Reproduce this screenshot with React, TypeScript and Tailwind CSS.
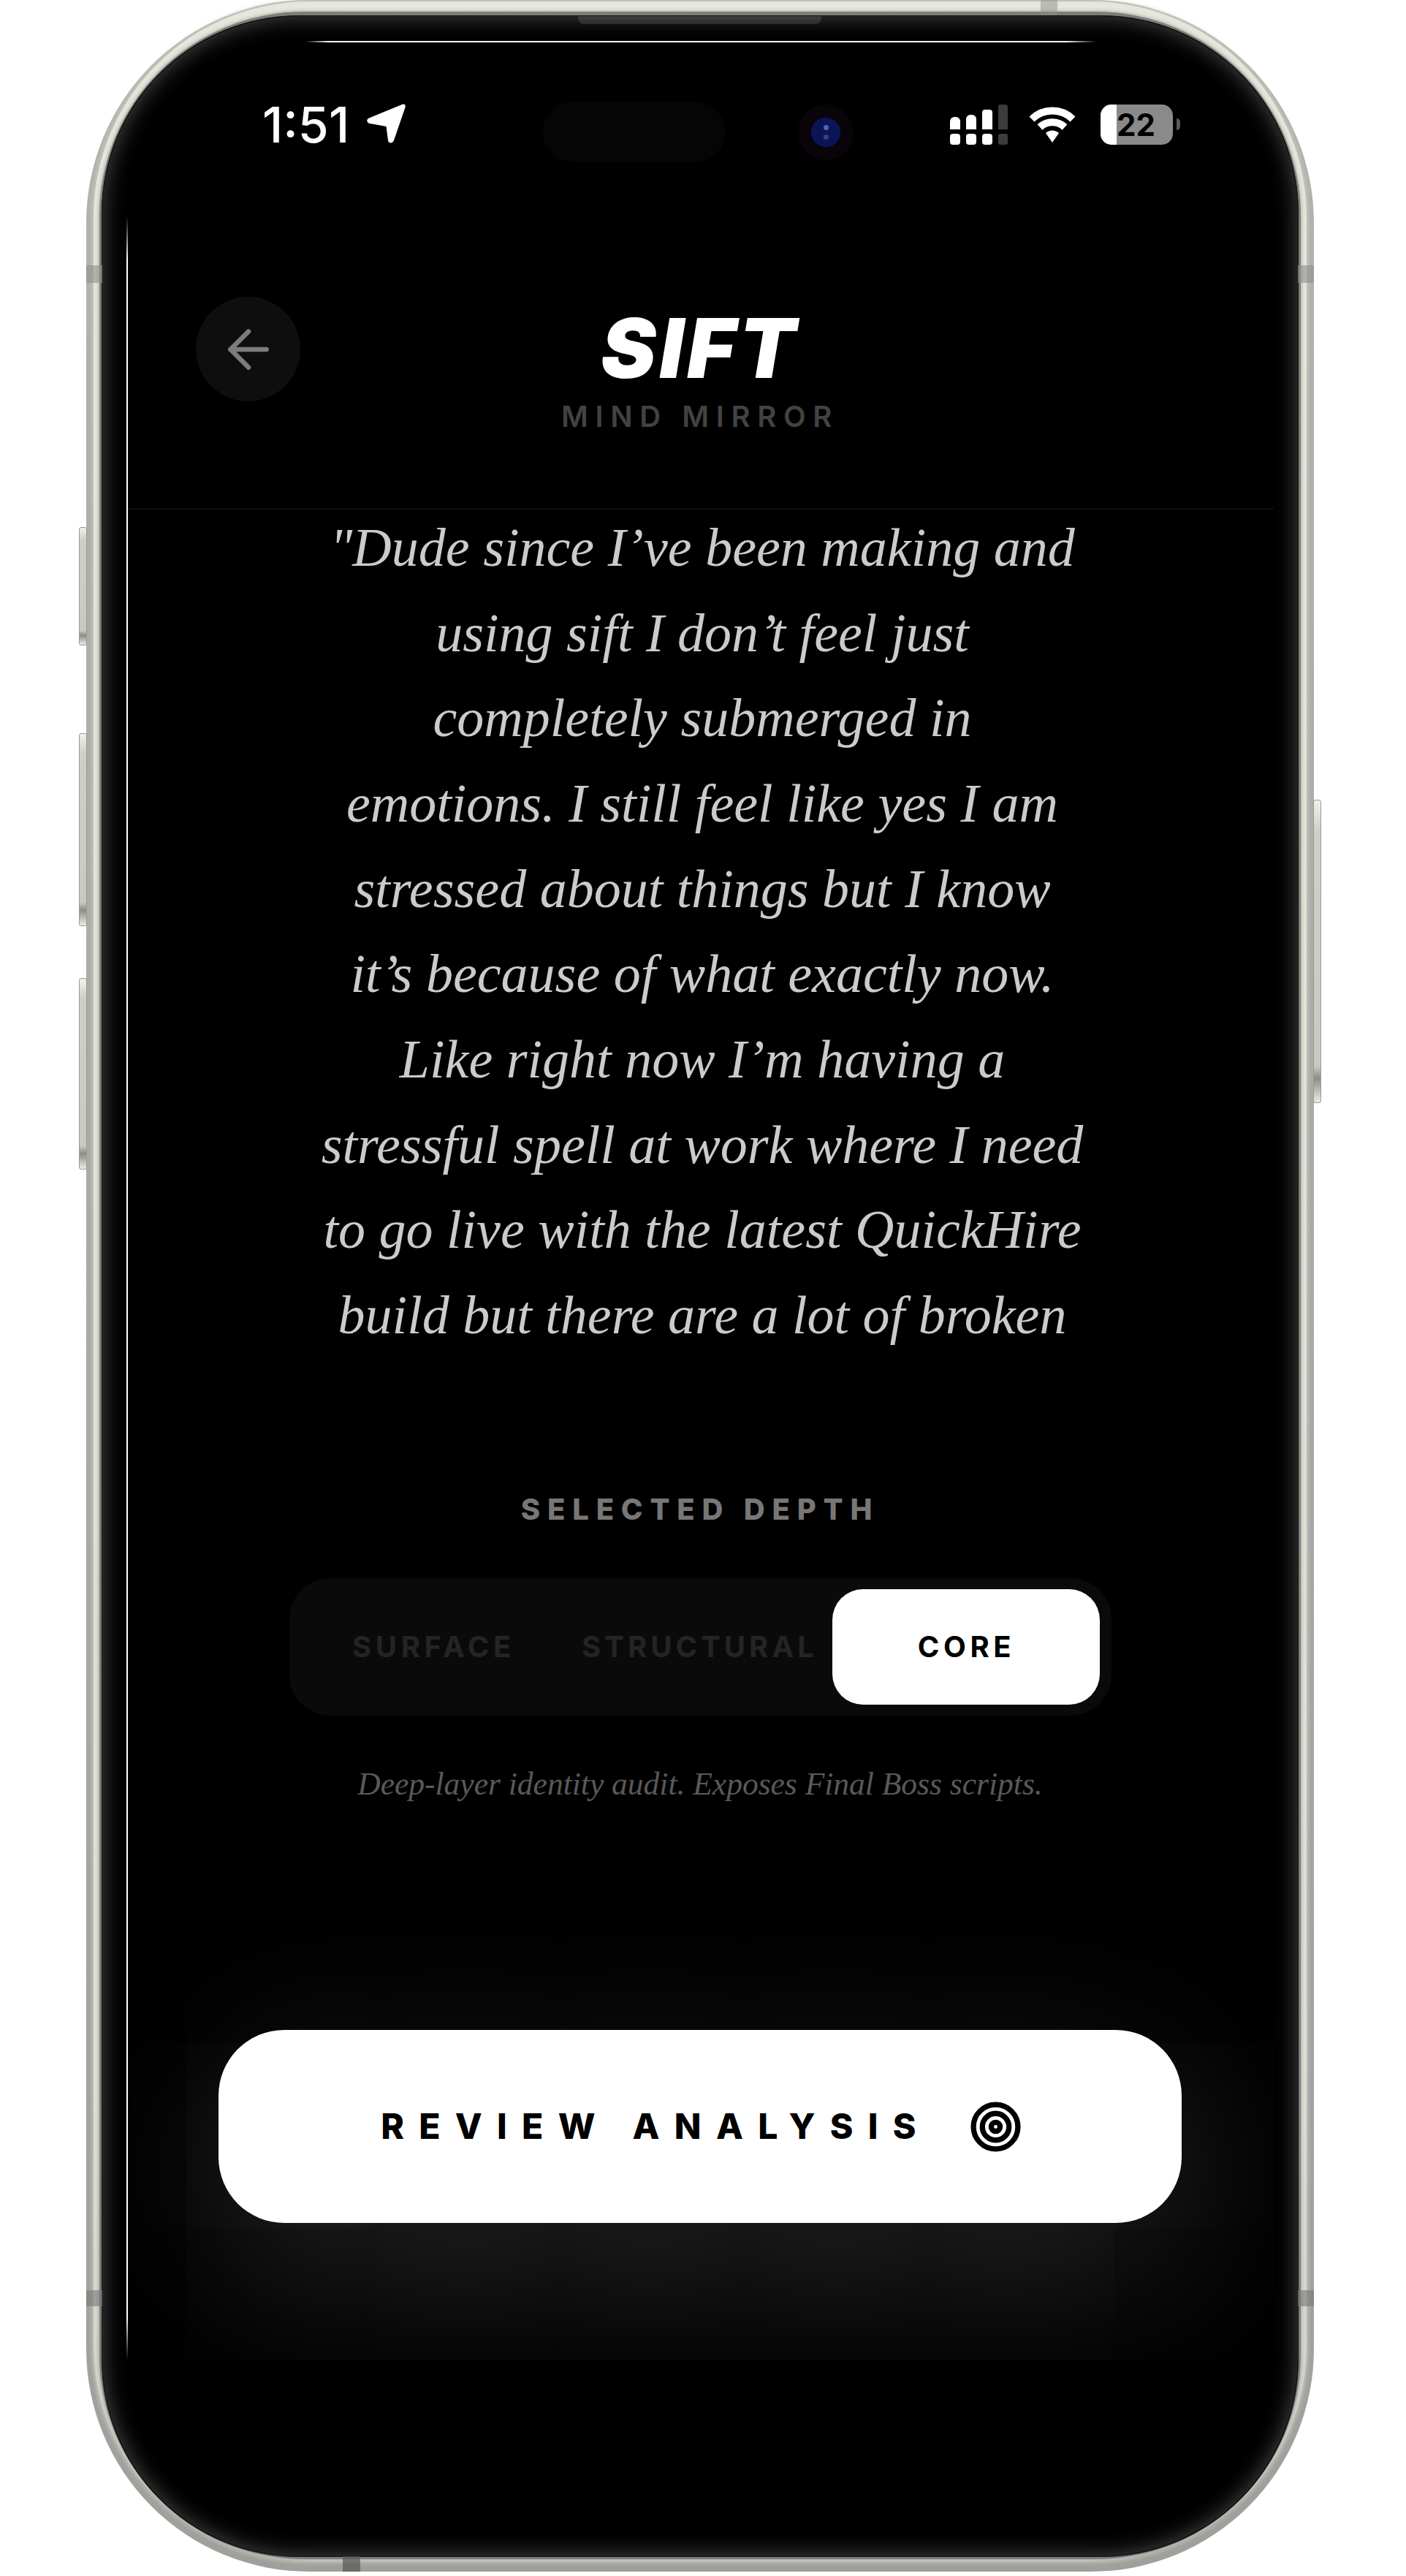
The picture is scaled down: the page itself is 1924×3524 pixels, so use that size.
import React from 'react';
import { ArrowLeft, Target } from 'lucide-react';

const quoteLines = [
  '"Dude since I’ve been making and',
  'using sift I don’t feel just',
  'completely submerged in',
  'emotions. I still feel like yes I am',
  'stressed about things but I know',
  'it’s because of what exactly now.',
  'Like right now I’m having a',
  'stressful spell at work where I need',
  'to go live with the latest QuickHire',
  'build but there are a lot of broken',
];

function SideButton({ className }: { className: string }) {
  return (
    <div
      className={`absolute w-[11px] rounded-[3px] border border-[#9a9a96] bg-[linear-gradient(180deg,#f2f2ec_0%,#cfcfca_10%,#c9c9c4_88%,#8c8c88_92%,#ecece6_100%)] ${className}`}
    />
  );
}

function StatusBar() {
  return (
    <div className="flex h-[56px] items-center justify-between pl-[186px] pr-[128px] text-white">
      <div className="flex items-center gap-[24px]">
        <span className="font-['Inter'] text-[68px] leading-[56px] font-medium">1:51</span>
        <svg width="53" height="54" viewBox="0 0 53 54" className="mt-[-2px]">
          <path d="M48 1 C51.5 -0.5 53.5 1.5 52.5 5 L37 50 C35.5 54.5 29.5 54.5 29 50 L26.5 31 L4 27 C-0.5 26 -1 21 3 19.5 Z" fill="#fff" />
        </svg>
      </div>
      <div className="flex items-center">
        <div className="flex flex-col gap-[6px]">
          <div className="flex items-end gap-[8px]">
            <div className="h-[17px] w-[14px] rounded-t-[6px] bg-white" />
            <div className="h-[20px] w-[14px] rounded-t-[6px] bg-white" />
            <div className="h-[27px] w-[14px] rounded-t-[4px] bg-white" />
            <div className="h-[34px] w-[13px] rounded-t-[3px] bg-[#3c3c3c]" />
          </div>
          <div className="flex gap-[8px]">
            <div className="h-[15px] w-[14px] rounded-[4px] bg-white" />
            <div className="h-[15px] w-[14px] rounded-[4px] bg-white" />
            <div className="h-[15px] w-[14px] rounded-[4px] bg-white" />
            <div className="h-[15px] w-[13px] rounded-[3px] bg-[#3c3c3c]" />
          </div>
        </div>
        <svg width="66" height="50" viewBox="0 0 66 50" className="ml-[28px]">
          <path d="M5 18 A40 40 0 0 1 61 18" fill="none" stroke="#fff" strokeWidth="10" />
          <path d="M16 29 A25 25 0 0 1 50 29" fill="none" stroke="#fff" strokeWidth="10" />
          <path d="M24 37 A13 13 0 0 1 42 37 L33 50 Z" fill="#fff" />
        </svg>
        <div className="ml-[33px] flex h-[55px] w-[99px] overflow-hidden rounded-[15px] bg-[#8a8a8a]">
          <div className="h-full w-[22px] bg-white" />
          <span className="w-[53px] text-center font-['Inter'] text-[42px] leading-[55px] font-bold text-black">22</span>
        </div>
        <div className="ml-[5px] h-[16px] w-[5px] rounded-r-full bg-[#5a5a5a]" />
      </div>
    </div>
  );
}

export default function App() {
  return (
    <div className="h-[3524px] w-[1924px] bg-white">
      <div className="relative ml-[118px] h-[3518px] w-[1680px]">
        {/* hardware buttons */}
        <SideButton className="left-[-10px] top-[721px] h-[162px]" />
        <SideButton className="left-[-10px] top-[1003px] h-[264px]" />
        <SideButton className="left-[-10px] top-[1338px] h-[262px]" />
        <SideButton className="right-[-10px] top-[1094px] h-[415px]" />

        {/* metal frame */}
        <div className="h-full rounded-[305px] bg-[linear-gradient(180deg,#b4b4af,#a09f9b)] pt-[2px] px-[10px] pb-[14px]">
          <div className="h-full rounded-[295px] bg-[linear-gradient(180deg,#e6e6dc_0%,#dedfd5_80%,#cfcfc9_100%)] pt-[14px] px-[8px] pb-[3px] shadow-[0_0_5px_2px_rgba(205,205,198,0.8)]">
            <div className="h-full rounded-[280px] bg-[#7d7d7a] pt-[5px] px-[3px] pb-[3px] shadow-[0_0_4px_1px_rgba(150,150,146,0.7)]">
              <div className="relative flex h-full flex-col overflow-hidden rounded-[270px] border border-[#111111] bg-black">
                {/* screen edge glow */}
                <div className="pointer-events-none absolute inset-0 z-10 rounded-[270px] shadow-[inset_0_0_30px_rgba(255,255,255,0.3)]" />
                {/* speaker */}
                <div className="absolute left-[651px] top-0 h-[11px] w-[333px] rounded-b-[8px] bg-[#1e1e1e]" />
                {/* island and camera */}
                <div className="absolute left-[602px] top-[117px] h-[83px] w-[251px] rounded-[42px] bg-[#050505]" />
                <div className="absolute left-[952px] top-[121px] flex h-[76px] w-[76px] items-center justify-center rounded-full bg-[#08040a]">
                  <div className="flex h-[40px] w-[40px] flex-col items-center justify-center gap-[6px] rounded-full bg-[#0c1458]">
                    <div className="h-[7px] w-[7px] rounded-full bg-[#5560b8]" />
                    <div className="h-[7px] w-[7px] rounded-full bg-[#3a4270]" />
                  </div>
                </div>
                {/* render seams */}
                <div className="absolute left-[278px] top-[34px] h-[2px] w-[1083px] bg-[linear-gradient(90deg,transparent,#fff_3%,#fff_96%,transparent)]" />
                <div className="absolute left-[33px] top-[274px] h-[2933px] w-[2px] bg-[linear-gradient(180deg,transparent,#fff_2%,#fff_98%,transparent)]" />

                <div className="mx-[33px] flex h-[3207px] flex-col overflow-hidden pt-[120px]">
                  <StatusBar />

                  <header className="mt-[208px] h-[291px] shrink-0 border-b-2 border-[#0f0f0f]">
                    <div className="grid grid-cols-[1fr_auto_1fr] items-start">
                      <button className="ml-[95px] flex h-[143px] w-[143px] items-center justify-center rounded-full bg-[#0e0e0e] text-[#7c7c7c]">
                        <ArrowLeft size={84} strokeWidth={1.9} />
                      </button>
                      <div className="flex flex-col items-center pt-[10px]">
                        <h1 className="font-['Inter'] text-[113px] leading-[120px] font-black italic tracking-[5px] text-white">SIFT</h1>
                        <p className="mt-[10px] font-['Inter'] text-[40px] leading-[48px] font-semibold tracking-[0.24em] text-[#424242]">MIND MIRROR</p>
                      </div>
                      <div />
                    </div>
                  </header>

                  <div className="mt-[-6px] h-[1188px] shrink-0 pl-[6px] text-center font-['Liberation_Serif'] text-[74px] leading-[116.67px] text-[#cbcbcb] italic">
                    {quoteLines.map((line) => (
                      <div key={line}>{line}</div>
                    ))}
                  </div>

                  <p className="mt-[162px] text-center font-['Inter'] text-[40px] leading-[48px] font-extrabold tracking-[0.245em] text-[#777777]">SELECTED DEPTH</p>

                  <div className="mx-auto mt-[70px] flex h-[188px] w-[1125px] shrink-0 items-center rounded-[56px] bg-[#0a0a0a] pl-[15px] pr-[15px]">
                    <span className="w-[366px] text-center font-['Inter'] text-[40px] font-bold tracking-[0.14em] text-[#242424]">SURFACE</span>
                    <span className="w-[362px] text-center font-['Inter'] text-[40px] font-bold tracking-[0.125em] text-[#242424]">STRUCTURAL</span>
                    <span className="flex h-[158px] w-[366px] items-center justify-center rounded-[42px] bg-white pl-[2px] font-['Inter'] text-[40px] font-bold tracking-[0.14em] text-black">CORE</span>
                  </div>

                  <p className="mt-[65px] text-center font-['Liberation_Serif'] text-[43.5px] leading-[56px] text-[#595959] italic">Deep-layer identity audit. Exposes Final Boss scripts.</p>

                  <div className="mx-[126px] mt-[309px] flex h-[264px] shrink-0 items-center justify-center gap-[52px] rounded-[90px] bg-white pl-[4px] shadow-[0_60px_240px_rgba(255,255,255,0.18)]">
                    <span className="font-['Inter'] text-[48px] font-extrabold tracking-[0.423em] text-black">REVIEW ANALYSIS</span>
                    <Target size={73} strokeWidth={2.4} className="text-black" />
                  </div>
                </div>
              </div>
            </div>
          </div>
        </div>

        {/* antenna bands */}
        <div className="absolute left-0 top-[363px] h-[24px] w-[22px] bg-[#8f8f8b]/60" />
        <div className="absolute right-0 top-[363px] h-[24px] w-[22px] bg-[#8f8f8b]/60" />
        <div className="absolute left-0 top-[3133px] h-[22px] w-[22px] bg-[#777]/60" />
        <div className="absolute right-0 top-[3133px] h-[22px] w-[22px] bg-[#777]/60" />
        <div className="absolute left-[1306px] top-0 h-[21px] w-[23px] bg-[#8f8f8b]/50" />
        <div className="absolute bottom-0 left-[351px] h-[21px] w-[24px] bg-[#555]/70" />
      </div>
    </div>
  );
}
